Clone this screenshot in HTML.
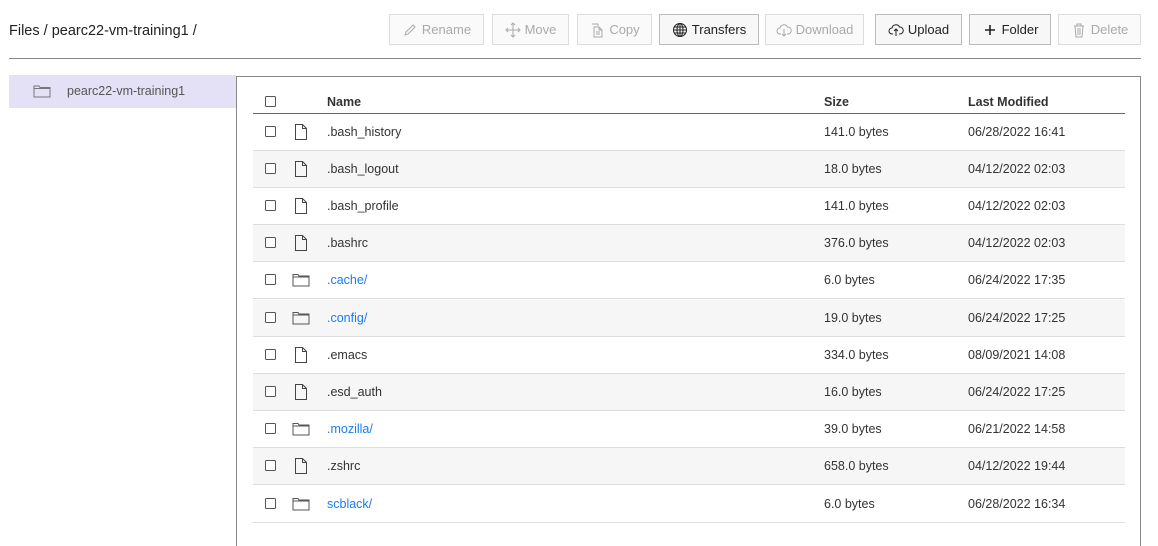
<!DOCTYPE html>
<html><head><style>
*{box-sizing:border-box;margin:0;padding:0}
body{width:1158px;height:531px;overflow:hidden;background:#fff;font-family:"Liberation Sans",Arial,sans-serif;font-size:12.5px;color:#333;position:relative}
.crumb{position:absolute;left:9px;top:23px;font-size:14.5px;color:#222}
.hr{position:absolute;left:9px;top:58px;width:1132px;height:1px;background:#888}
.btn{position:absolute;top:14px;height:31px;border:1px solid #bbb;background:#f7f7f7;display:flex;align-items:center;justify-content:center;gap:4px;font-size:13px;color:#222}
.btn.dis{border-color:#ddd;background:#fafafa;color:#aaa}
.btn svg{width:16px;height:16px}
.side{position:absolute;left:9px;top:75px;width:227px;height:33px;background:#e4e0f6;color:#555;font-size:12.5px}
.side span{position:absolute;left:58px;top:9px}
.side svg{position:absolute;left:24px;top:9px}
.panel{position:absolute;left:236px;top:76px;width:905px;height:470px;border:1px solid #888;border-bottom:none}
.th{position:absolute;left:16px;top:12px;width:872px;height:25px;border-bottom:1px solid #666;font-weight:bold;font-size:12.5px}
.row{position:absolute;left:16px;width:872px;height:37.2px;border-bottom:1px solid #ddd}
.row.g{background:#f6f6f6}
.cb{position:absolute;left:12px;width:11px;height:11px;border:1px solid #555;border-radius:1.5px;background:#fff}
.c{position:absolute}
a{color:#1a7cf0;text-decoration:none}
</style></head><body>
<div class="crumb">Files / pearc22-vm-training1 /</div>
<div class="hr"></div>

<div class="btn dis" style="left:389px;width:95px"><svg viewBox="0 0 16 16" fill="none" stroke="#aaa"><path d="M3 13l1-3 7-7 2 2-7 7z"/></svg>Rename</div>
<div class="btn dis" style="left:492px;width:77px"><svg viewBox="0 0 16 16" fill="none" stroke="#aaa"><path d="M8 1v14M1 8h14M6 3l2-2 2 2M6 13l2 2 2-2M3 6L1 8l2 2M13 6l2 2-2 2"/></svg>Move</div>
<div class="btn dis" style="left:577px;width:75px"><svg viewBox="0 0 16 16" fill="none" stroke="#aaa"><path d="M3 2h6v2M5 5h5l3 3v7H5zM10 5v3h3M7 10h4M7 12h4"/></svg>Copy</div>
<div class="btn" style="left:659px;width:100px"><svg viewBox="0 0 16 16" fill="none" stroke="#222"><circle cx="8" cy="8" r="6.5"/><ellipse cx="8" cy="8" rx="3" ry="6.5"/><path d="M1.5 8h13M2.5 5h11M2.5 11h11M8 1.5v13"/></svg>Transfers</div>
<div class="btn dis" style="left:765px;width:99px"><svg viewBox="0 0 16 16" fill="none" stroke="#aaa"><path d="M5 12H4a3 3 0 010-6 4 4 0 017.5-1A3 3 0 0112 12h-1M8 7v7M6 12l2 2 2-2"/></svg>Download</div>
<div class="btn" style="left:875px;width:87px"><svg viewBox="0 0 16 16" fill="none" stroke="#222"><path d="M5 12H4a3 3 0 010-6 4 4 0 017.5-1A3 3 0 0112 12h-1M8 14V7M6 9l2-2 2 2"/></svg>Upload</div>
<div class="btn" style="left:969px;width:82px"><svg viewBox="0 0 16 16" fill="none" stroke="#222" stroke-width="1.6"><path d="M8 3v10M3 8h10"/></svg>Folder</div>
<div class="btn dis" style="left:1058px;width:83px"><svg viewBox="0 0 16 16" fill="none" stroke="#aaa"><path d="M3 4h10M6 4V2h4v2M4 4l1 11h6l1-11M7 6v7M9 6v7"/></svg>Delete</div>

<div class="side"><svg width="18" height="14" viewBox="0 0 18 14" fill="none" stroke="#777"><path d="M1 2h5l1 1.5h10V13H1z M1 4.5h16"/></svg><span>pearc22-vm-training1</span></div>

<div class="panel">
<div class="th"><div class="cb" style="top:7px"></div><div class="c" style="left:74px;top:6px">Name</div><div class="c" style="left:571px;top:6px">Size</div><div class="c" style="left:715px;top:6px">Last Modified</div></div>
<div id="rows"></div>
</div>
<script>
var d=[["f",".bash_history","141.0 bytes","06/28/2022 16:41"],["f",".bash_logout","18.0 bytes","04/12/2022 02:03"],["f",".bash_profile","141.0 bytes","04/12/2022 02:03"],["f",".bashrc","376.0 bytes","04/12/2022 02:03"],["d",".cache/","6.0 bytes","06/24/2022 17:35"],["d",".config/","19.0 bytes","06/24/2022 17:25"],["f",".emacs","334.0 bytes","08/09/2021 14:08"],["f",".esd_auth","16.0 bytes","06/24/2022 17:25"],["d",".mozilla/","39.0 bytes","06/21/2022 14:58"],["f",".zshrc","658.0 bytes","04/12/2022 19:44"],["d","scblack/","6.0 bytes","06/28/2022 16:34"]];
var fi='<svg width="14" height="18" viewBox="0 0 14 18" fill="none" stroke="#444"><path d="M1.5 1.5h7l4 4v11h-11zM8.5 1.5v4h4"/></svg>';
var fo='<svg width="18" height="14" viewBox="0 0 18 14" fill="none" stroke="#555"><path d="M1 1.5h5l1 1.5h10v10H1z M1 4h16"/></svg>';
var h='';
d.forEach(function(r,i){var t=36.5+i*37.2;
h+='<div class="row'+(i%2?' g':'')+'" style="top:'+t+'px"><div class="cb" style="top:12px"></div><div class="c" style="left:'+(r[0]=="f"?41:39)+'px;top:'+(r[0]=="f"?9:11)+'px">'+(r[0]=="f"?fi:fo)+'</div><div class="c" style="left:74px;top:11px">'+(r[0]=="d"?'<a>'+r[1]+'</a>':r[1])+'</div><div class="c" style="left:571px;top:11px">'+r[2]+'</div><div class="c" style="left:715px;top:11px">'+r[3]+'</div></div>';});
document.getElementById('rows').innerHTML=h;
</script>
</body></html>
